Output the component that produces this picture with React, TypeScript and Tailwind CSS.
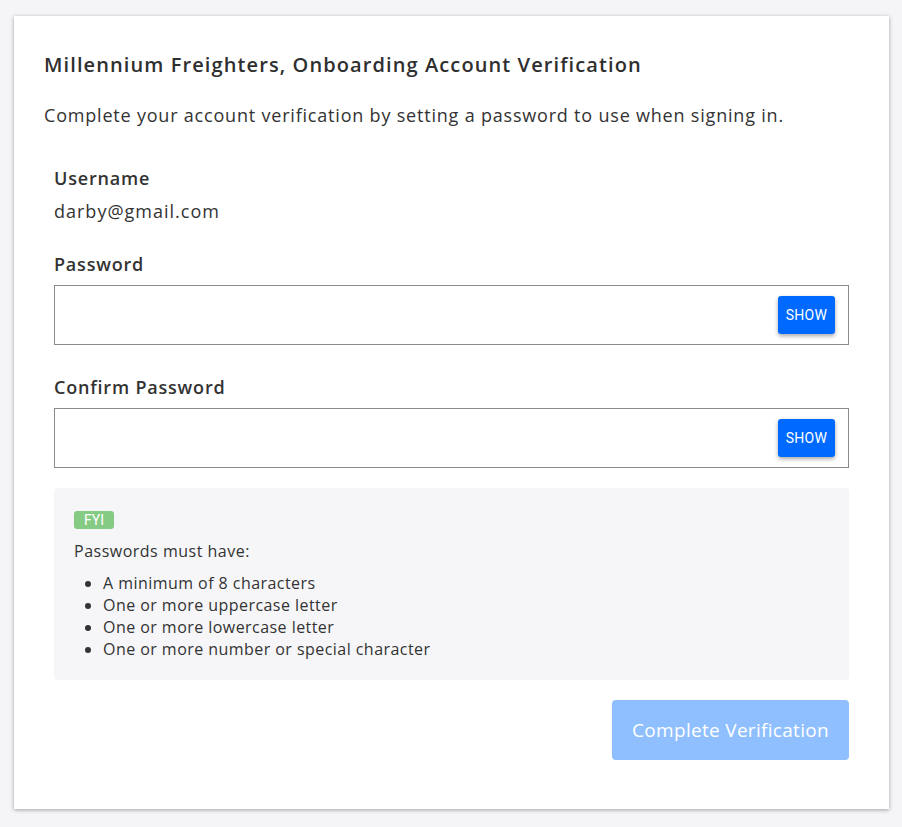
import { useState } from 'react';

const font = { fontFamily: '"Open Sans", sans-serif' };
const roboto = { fontFamily: '"Roboto", sans-serif' };

function PasswordField({ label }: { label: string }) {
  const [shown, setShown] = useState(false);
  const [value, setValue] = useState('');

  return (
    <div>
      <label className="block text-[18px] font-semibold leading-[24px] tracking-[0.8px] text-[#333]">{label}</label>
      <div className="mt-[9px] flex h-[60px] items-center border border-[#8a8a8a] bg-white pl-3 pr-[13px]">
        <input
          type={shown ? 'text' : 'password'}
          value={value}
          onChange={(e) => setValue(e.target.value)}
          className="h-full flex-1 bg-transparent text-[16px] text-[#333] outline-none"
        />
        <button
          onClick={() => setShown(!shown)}
          className="h-[38px] w-[57px] rounded-[3px] bg-[#0069ff] text-[14px] tracking-[0.3px] text-white shadow-[0_2px_4px_rgba(0,0,0,0.35)]"
          style={roboto}
        >
          {shown ? 'HIDE' : 'SHOW'}
        </button>
      </div>
    </div>
  );
}

export default function App() {
  return (
    <div className="min-h-screen bg-[#f5f5f7] pb-[18px] pl-[14px] pr-[13px] pt-[16px]" style={font}>
      <div className="bg-white px-[30px] pb-[49px] pt-[30px] shadow-[0_1px_4px_rgba(0,0,0,0.35)]">
        {/* Header */}
        <h1 className="text-[20px] font-semibold leading-[38px] tracking-[1.1px] text-[#2f2f2f]">
          Millennium Freighters, Onboarding Account Verification
        </h1>
        <p className="mt-4 text-[18px] leading-[30px] tracking-[0.8px] text-[#333]">
          Complete your account verification by setting a password to use when signing in.
        </p>

        <div className="mt-9 px-[10px]">
          {/* Username */}
          <div className="text-[18px] font-semibold leading-[24px] tracking-[0.8px] text-[#333]">Username</div>
          <div className="mt-[9px] text-[18px] leading-[24px] tracking-[1px] text-[#333]">darby@gmail.com</div>

          <div className="mt-[29px]">
            <PasswordField label="Password" />
          </div>
          <div className="mt-[30px]">
            <PasswordField label="Confirm Password" />
          </div>

          {/* Requirements */}
          <div className="mt-5 rounded-[4px] bg-[#f6f6f8] px-5 pb-5 pt-[23px]">
            <div
              className="h-[18px] w-[40px] rounded-[3px] bg-[#86cb84] text-center text-[14px] leading-[18px] text-white"
              style={roboto}
            >
              FYI
            </div>
            <p className="mt-[11px] text-[16px] leading-[22px] tracking-[0.5px] text-[#333]">Passwords must have:</p>
            <ul className="mt-[10px] list-disc pl-[29px] text-[16px] leading-[22px] tracking-[0.45px] text-[#333]">
              <li>A minimum of 8 characters</li>
              <li>One or more uppercase letter</li>
              <li>One or more lowercase letter</li>
              <li>One or more number or special character</li>
            </ul>
          </div>

          <div className="mt-5 flex justify-end">
            <button
              disabled
              className="h-[60px] w-[237px] rounded-[4px] bg-[#8fbffe] text-[19px] tracking-[0.3px] text-white"
            >
              Complete Verification
            </button>
          </div>
        </div>
      </div>
    </div>
  );
}
